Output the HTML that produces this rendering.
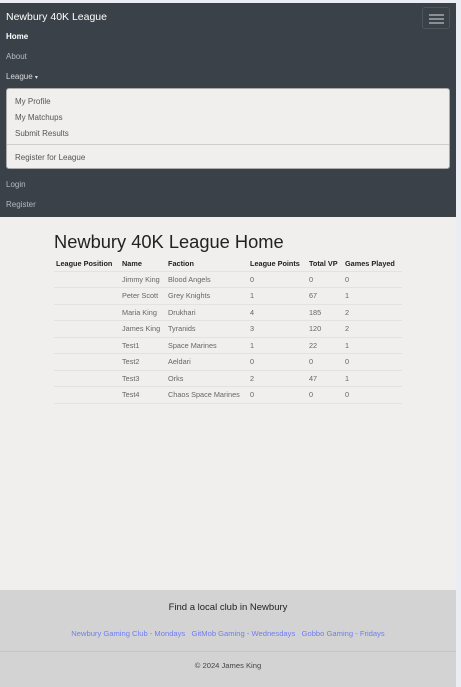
<!DOCTYPE html>
<html><head><meta charset="utf-8"><style>
*{margin:0;padding:0;box-sizing:border-box}
body{width:461px;height:687px;background:#eaedf3;font-family:"Liberation Sans",sans-serif;position:relative;overflow:hidden}
.a{position:absolute;white-space:nowrap}
#nav{position:absolute;left:0;top:3px;width:456px;height:214px;background:#3a4149}
#main{position:absolute;left:0;top:217px;width:456px;height:373px;background:#f0efed}
#foot{position:absolute;left:0;top:590px;width:456px;height:97px;background:#d3d3d3}
.nl{font-size:8px;color:#b6b9bd;left:6px}
#dd{position:absolute;left:6px;top:85px;width:444px;height:81px;background:#f0efed;border:1px solid #aaa;border-radius:3px}
#dd div{position:absolute;left:8px;font-size:8px;color:#555}
table{position:absolute;left:54px;top:256px;border-collapse:collapse;font-size:7.3px;color:#666;table-layout:fixed;width:348px}
th,td{white-space:nowrap;overflow:hidden}
th{color:#222;text-align:left;font-weight:bold;height:15px;padding:0 2px;vertical-align:middle}
td{height:16.5px;border-top:1px solid #e3e2e0;padding:0 2px;vertical-align:middle}
tr:last-child td{border-bottom:1px solid #e3e2e0}
</style></head><body>
<div id="nav">
<div class="a" style="left:6px;top:8px;font-size:10.5px;color:#fff">Newbury 40K League</div>
<div class="a" style="left:422px;top:4px;width:28px;height:22px;border:1px solid #4d545b;border-radius:3px">
<div style="position:absolute;left:6px;top:6px;width:15px;height:2px;background:#8a8f94;box-shadow:0 4px 0 #8a8f94,0 8px 0 #8a8f94"></div></div>
<div class="a nl" style="top:29px;color:#fff;font-weight:bold">Home</div>
<div class="a nl" style="top:49px">About</div>
<div class="a nl" style="top:69px;color:#d8dadc">League <span style="font-size:6px">▾</span></div>
<div id="dd">
<div style="top:8px">My Profile</div>
<div style="top:24px">My Matchups</div>
<div style="top:40px">Submit Results</div>
<div style="top:55px;left:0;width:442px;height:1px;background:#ccc"></div>
<div style="top:64px">Register for League</div>
</div>
<div class="a nl" style="top:177px">Login</div>
<div class="a nl" style="top:197px">Register</div>
</div>
<div id="main"></div>
<div class="a" style="left:54px;top:231px;font-size:18.3px;color:#222">Newbury 40K League Home</div>
<table>
<colgroup><col style="width:66px"><col style="width:46px"><col style="width:82px"><col style="width:59px"><col style="width:36px"><col style="width:59px"></colgroup>
<tr><th>League Position</th><th>Name</th><th>Faction</th><th>League Points</th><th>Total VP</th><th>Games Played</th></tr>
<tr><td></td><td>Jimmy King</td><td>Blood Angels</td><td>0</td><td>0</td><td>0</td></tr>
<tr><td></td><td>Peter Scott</td><td>Grey Knights</td><td>1</td><td>67</td><td>1</td></tr>
<tr><td></td><td>Maria King</td><td>Drukhari</td><td>4</td><td>185</td><td>2</td></tr>
<tr><td></td><td>James King</td><td>Tyranids</td><td>3</td><td>120</td><td>2</td></tr>
<tr><td></td><td>Test1</td><td>Space Marines</td><td>1</td><td>22</td><td>1</td></tr>
<tr><td></td><td>Test2</td><td>Aeldari</td><td>0</td><td>0</td><td>0</td></tr>
<tr><td></td><td>Test3</td><td>Orks</td><td>2</td><td>47</td><td>1</td></tr>
<tr><td></td><td>Test4</td><td>Chaos Space Marines</td><td>0</td><td>0</td><td>0</td></tr>
</table>
<div id="foot">
<div class="a" style="left:0;width:456px;text-align:center;top:12px;font-size:9.5px;color:#222">Find a local club in Newbury</div>
<div class="a" style="left:0;width:456px;text-align:center;top:39px;font-size:7.6px;color:#6f7df5">Newbury Gaming Club - Mondays &nbsp; GitMob Gaming - Wednesdays &nbsp; Gobbo Gaming - Fridays</div>
<div class="a" style="left:0;top:61px;width:456px;height:1px;background:#c6c6c6"></div>
<div class="a" style="left:0;width:456px;text-align:center;top:71px;font-size:7.6px;color:#444">© 2024 James King</div>
</div>
</body></html>
